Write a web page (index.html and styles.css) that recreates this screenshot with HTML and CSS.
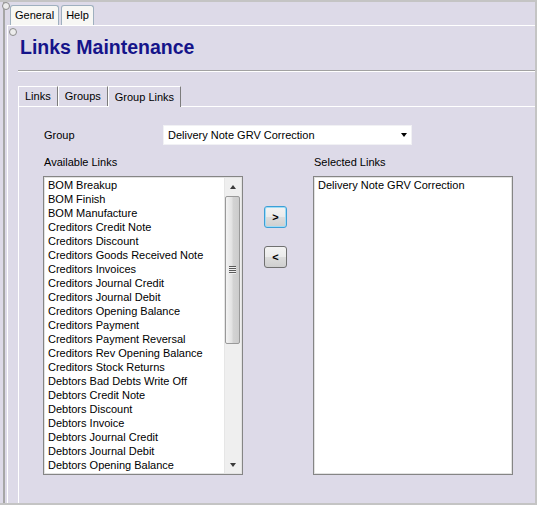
FILE: index.html
```html
<!DOCTYPE html>
<html>
<head>
<meta charset="utf-8">
<title>Links Maintenance</title>
<link rel="stylesheet" href="styles.css">
</head>
<body>
<div class="window">
  <span class="knob knob-top"></span>
  <div class="rail">
    <div class="menu-tabs">
      <div class="menu-tab">General</div>
      <div class="menu-tab">Help</div>
    </div>
    <div class="page">
      <span class="knob knob-page"></span>
      <h1 class="title">Links Maintenance</h1>
      <div class="sep"></div>
      <div class="tabs">
        <div class="tab">Links</div>
        <div class="tab">Groups</div>
        <div class="tab active">Group Links</div>
      </div>
      <div class="tab-body">
        <div class="group-row">
          <span class="lbl">Group</span>
          <div class="select">
            <span>Delivery Note GRV Correction</span>
            <span class="caret"></span>
          </div>
        </div>
        <div class="lists">
          <div class="col">
            <div class="col-label">Available Links</div>
            <div class="listbox">
              <ul class="items">
                <li>BOM Breakup</li>
                <li>BOM Finish</li>
                <li>BOM Manufacture</li>
                <li>Creditors Credit Note</li>
                <li>Creditors Discount</li>
                <li>Creditors Goods Received Note</li>
                <li>Creditors Invoices</li>
                <li>Creditors Journal Credit</li>
                <li>Creditors Journal Debit</li>
                <li>Creditors Opening Balance</li>
                <li>Creditors Payment</li>
                <li>Creditors Payment Reversal</li>
                <li>Creditors Rev Opening Balance</li>
                <li>Creditors Stock Returns</li>
                <li>Debtors Bad Debts Write Off</li>
                <li>Debtors Credit Note</li>
                <li>Debtors Discount</li>
                <li>Debtors Invoice</li>
                <li>Debtors Journal Credit</li>
                <li>Debtors Journal Debit</li>
                <li>Debtors Opening Balance</li>
              </ul>
              <div class="scroll">
                <div class="sb-btn"><span class="tri-up"></span></div>
                <div class="thumb"><span class="grip"></span></div>
                <div class="sb-track"></div>
                <div class="sb-btn"><span class="tri-down"></span></div>
              </div>
            </div>
          </div>
          <div class="btns">
            <button class="mv focus">&gt;</button>
            <button class="mv">&lt;</button>
          </div>
          <div class="col">
            <div class="col-label">Selected Links</div>
            <div class="listbox">
              <ul class="items">
                <li>Delivery Note GRV Correction</li>
              </ul>
            </div>
          </div>
        </div>
      </div>
    </div>
  </div>
</div>
</body>
</html>
```

FILE: styles.css
```css
* { box-sizing: border-box; }
html, body { margin: 0; padding: 0; }
body {
  font-family: "Liberation Sans", Arial, sans-serif;
  font-size: 11px;
  color: #000;
  background: #dddae8;
}
.window {
  position: relative;
  width: 537px;
  height: 505px;
  background: #dddae8;
  border-top: 2px solid #c4c4c4;
  border-right: 2px solid #c4c4c4;
  border-bottom: 2px solid #c4c4c4;
  padding-left: 3px;
  display: flex;
}
.knob {
  position: absolute;
  width: 8px;
  height: 8px;
  border-radius: 50%;
  background: #ececec;
  border: 1px solid #8c8c8c;
}
.knob-top { left: 2px; top: 0; }
.knob-page { left: 1px; top: 2px; }
.rail {
  flex: 1;
  border-left: 2px solid #a6a6a6;
  display: flex;
  flex-direction: column;
}
.menu-tabs {
  height: 23px;
  display: flex;
  align-items: flex-end;
  gap: 2px;
  padding-left: 5px;
}
.menu-tab {
  height: 20px;
  line-height: 19px;
  padding: 0 4px;
  background: #f7f7f4;
  border: 1px solid #9fb0bf;
  border-bottom: none;
  border-radius: 3px 3px 0 0;
}
.page {
  position: relative;
  flex: 1;
  margin-left: 2px;
  border-left: 1px solid #ffffff;
  border-top: 1px solid #ffffff;
  display: flex;
  flex-direction: column;
}
.title {
  margin: 10px 0 0 12px;
  font-size: 19.5px;
  line-height: 23px;
  font-weight: bold;
  color: #15148a;
}
.sep {
  margin: 11px 0 0 10px;
  height: 2px;
  border-top: 1px solid #a2a2a2;
  border-bottom: 1px solid #ffffff;
}
.tabs {
  display: flex;
  margin: 14px 0 -1px 10px;
  height: 21px;
  align-items: flex-start;
}
.tab {
  height: 20px;
  line-height: 19px;
  padding: 0 6px;
  border-top: 1px solid #ffffff;
  border-left: 1px solid #ffffff;
  border-right: 1px solid #7c7c7c;
  background: #dddae8;
}
.tab.active {
  position: relative;
  z-index: 1;
  height: 21px;
  line-height: 21px;
}
.tab-body {
  flex: 1;
  margin-left: 10px;
  border-left: 1px solid #ffffff;
  border-top: 1px solid #ffffff;
  padding: 18px 0 0 25px;
}
.group-row {
  display: flex;
  align-items: center;
  height: 20px;
}
.lbl { width: 119px; }
.select {
  width: 249px;
  height: 20px;
  background: #ffffff;
  border: 1px solid #f1f1f4;
  display: flex;
  align-items: center;
  justify-content: space-between;
  padding: 0 4px;
}
.caret {
  width: 0;
  height: 0;
  border-left: 3.5px solid transparent;
  border-right: 3.5px solid transparent;
  border-top: 4px solid #000;
}
.lists {
  display: flex;
  margin: 11px 0 0 -1px;
}
.col {
  display: flex;
  flex-direction: column;
  width: 200px;
}
.col-label {
  line-height: 13px;
  padding-left: 1px;
}
.listbox {
  margin-top: 7px;
  width: 200px;
  height: 299px;
  background: #ffffff;
  border: 1px solid #858585;
  box-shadow: inset 0 0 0 1px #e2e2e2;
  padding: 1px;
  display: flex;
  overflow: hidden;
}
.items {
  flex: 1;
  list-style: none;
  margin: 0;
  padding: 0 0 0 3px;
  line-height: 14px;
  overflow: hidden;
  white-space: nowrap;
}
.scroll {
  width: 17px;
  background: #efefef;
  border-left: 1px solid #e6e6e6;
  display: flex;
  flex-direction: column;
}
.sb-btn {
  height: 17px;
  display: flex;
  align-items: center;
  justify-content: center;
  flex: none;
}
.tri-up, .tri-down {
  width: 0;
  height: 0;
  border-left: 3.5px solid transparent;
  border-right: 3.5px solid transparent;
}
.tri-up { border-bottom: 4px solid #3a3a3a; }
.tri-down { border-top: 4px solid #3a3a3a; }
.thumb {
  height: 148px;
  flex: none;
  margin: 1px 1px 0 0;
  border: 1px solid #999999;
  border-radius: 2px;
  background: linear-gradient(to right, #f3f3f3, #e2e2e2 45%, #d3d3d3 55%, #cccccc);
  display: flex;
  align-items: center;
  justify-content: center;
}
.grip {
  width: 7px;
  height: 8px;
  background: repeating-linear-gradient(to bottom, #5a5a5a 0 1px, #f0f0f0 1px 2px);
}
.sb-track { flex: 1; }
.btns {
  width: 23px;
  margin: 0 26px 0 21px;
  padding-top: 50px;
  display: flex;
  flex-direction: column;
  gap: 18px;
}
.mv {
  width: 23px;
  height: 22px;
  padding: 0;
  margin: 0;
  border: 1px solid #707070;
  border-radius: 3px;
  background: linear-gradient(to bottom, #f3f3f3, #ebebeb 50%, #dddddd 50%, #cfcfcf);
  font-family: "Liberation Sans", Arial, sans-serif;
  font-size: 11px;
  font-weight: bold;
  color: #000;
  display: flex;
  align-items: center;
  justify-content: center;
}
.mv.focus {
  border-color: #3c9fd6;
  box-shadow: inset 0 0 0 1px #9fdcf6;
}
```
